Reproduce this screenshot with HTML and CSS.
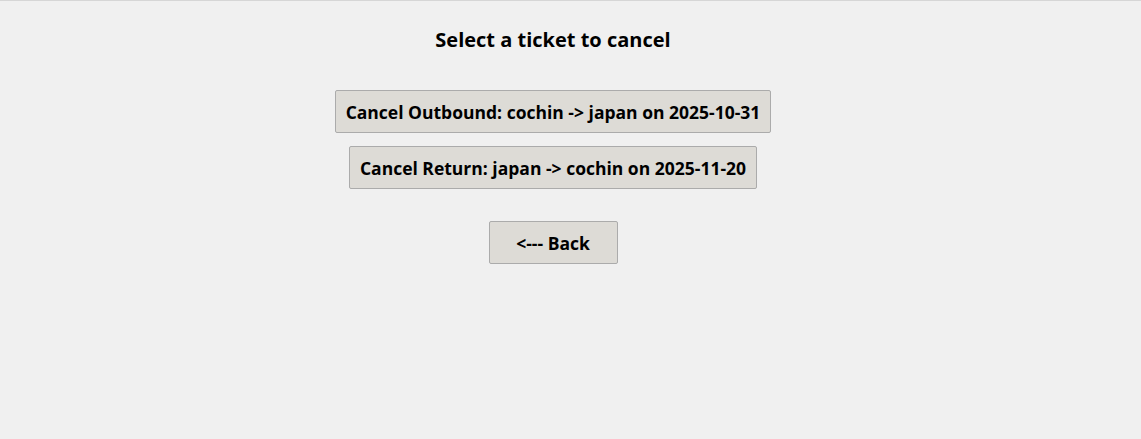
FILE: index.html
```html
<!DOCTYPE html>
<html>
<head>
<meta charset="utf-8">
<link rel="stylesheet" href="styles.css">
</head>
<body>
<div class="window">
  <div class="content">
    <h1 class="title">Select a ticket to cancel</h1>
    <div class="tickets">
      <button class="btn btn-wide">Cancel Outbound: cochin -&gt; japan on 2025-10-31</button>
      <button class="btn btn-wide">Cancel Return: japan -&gt; cochin on 2025-11-20</button>
    </div>
    <button class="btn btn-back">&lt;--- Back</button>
  </div>
</div>
</body>
</html>
```
FILE: styles.css
```css
html, body {
  margin: 0;
  padding: 0;
  background: #f0f0f0;
}
.window {
  width: 1141px;
  height: 439px;
  box-sizing: border-box;
  border-top: 1px solid #d6d6d6;
  background: #f0f0f0;
  font-family: "Open Sans", "DejaVu Sans", sans-serif;
}
.content {
  width: 1106px;
  display: flex;
  flex-direction: column;
  align-items: center;
  padding-top: 27px;
}
.title {
  margin: 0;
  font-size: 20px;
  font-weight: 700;
  color: #000;
  line-height: 24px;
}
.tickets {
  display: flex;
  flex-direction: column;
  align-items: center;
  gap: 13px;
  margin-top: 38px;
}
.btn {
  font-family: "Open Sans", "DejaVu Sans", sans-serif;
  font-weight: 700;
  font-size: 17.5px;
  color: #000;
  background: #dddbd6;
  border: 1px solid #ababab;
  border-radius: 2px;
  height: 43px;
  padding: 0 10px;
  box-sizing: border-box;
  line-height: 22px;
}
.btn-back {
  margin-top: 32px;
  width: 129px;
}
```
